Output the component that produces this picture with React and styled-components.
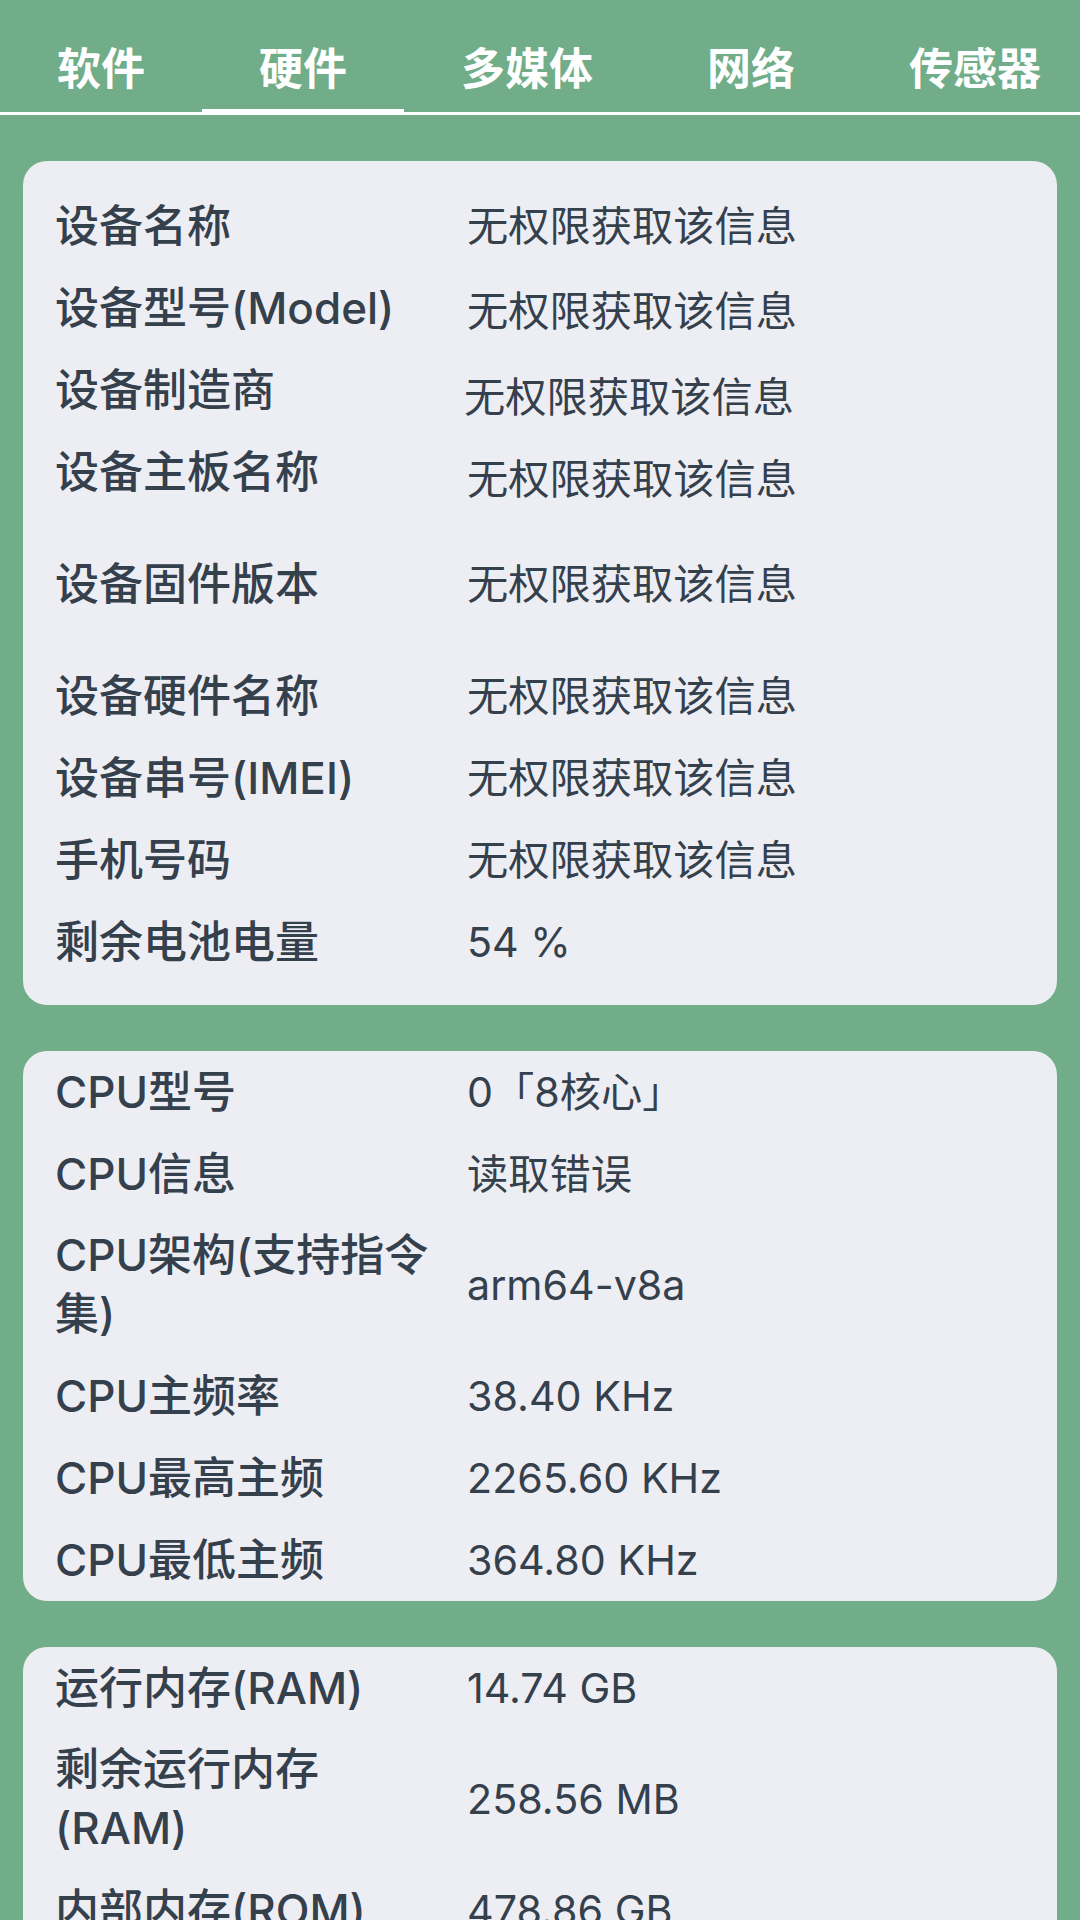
import React from 'react';
import styled, { createGlobalStyle } from 'styled-components';

const GlobalStyle = createGlobalStyle`
  html, body {
    margin: 0;
    padding: 0;
    background: #70ad88;
  }
  body {
    font-family: Inter, "Noto Sans CJK SC", sans-serif;
    color: #35404d;
  }
`;

const tabs = ['软件', '硬件', '多媒体', '网络', '传感器'];

const deviceRows = [
  { label: '设备名称', value: '无权限获取该信息' },
  { label: '设备型号(Model)', value: '无权限获取该信息', drop: 3 },
  { label: '设备制造商', value: '无权限获取该信息', drop: 7, nudge: -3 },
  { label: '设备主板名称', value: '无权限获取该信息', drop: 7 },
  { label: '设备固件版本', value: '无权限获取该信息', tall: true },
  { label: '设备硬件名称', value: '无权限获取该信息' },
  { label: '设备串号(IMEI)', value: '无权限获取该信息' },
  { label: '手机号码', value: '无权限获取该信息' },
  { label: '剩余电池电量', value: '54 %' },
];

const cpuRows = [
  { label: 'CPU型号', value: '0「8核心」' },
  { label: 'CPU信息', value: '读取错误' },
  { label: 'CPU架构(支持指令集)', value: 'arm64-v8a' },
  { label: 'CPU主频率', value: '38.40 KHz' },
  { label: 'CPU最高主频', value: '2265.60 KHz' },
  { label: 'CPU最低主频', value: '364.80 KHz' },
];

const memoryRows = [
  { label: '运行内存(RAM)', value: '14.74 GB' },
  { label: '剩余运行内存(RAM)', value: '258.56 MB' },
  { label: '内部内存(ROM)', value: '478.86 GB' },
];

const InfoCard = ({ rows, padded }) => (
  <Card $padded={padded}>
    {rows.map((row) => (
      <Row key={row.label} $tall={row.tall}>
        <Label>{row.label}</Label>
        <Value $drop={row.drop || 0} $nudge={row.nudge || 0}>
          {row.value}
        </Value>
      </Row>
    ))}
  </Card>
);

const App = () => {
  return (
    <Screen>
      <GlobalStyle />
      <TabBar>
        {tabs.map((tab, i) => (
          <Tab key={tab} $active={i === 1}>
            {tab}
          </Tab>
        ))}
      </TabBar>
      <Content>
        <InfoCard rows={deviceRows} padded />
        <InfoCard rows={cpuRows} />
        <InfoCard rows={memoryRows} />
      </Content>
    </Screen>
  );
};

export default App;

const Screen = styled.div`
  height: 1920px;
  overflow: hidden;
  background: #70ad88;
`;

const TabBar = styled.nav`
  display: flex;
  padding-top: 20px;
  border-bottom: 3px solid #ffffff;
  overflow: hidden;
`;

const Tab = styled.div`
  position: relative;
  flex-shrink: 0;
  height: 92px;
  padding: 0 57px;
  display: flex;
  align-items: center;
  font-size: 44px;
  font-weight: 700;
  color: #ffffff;
  white-space: nowrap;

  &::after {
    content: '';
    display: ${({ $active }) => ($active ? 'block' : 'none')};
    position: absolute;
    left: 0;
    right: 0;
    bottom: -3px;
    height: 6px;
    background: #ffffff;
  }
`;

const Content = styled.main`
  display: flex;
  flex-direction: column;
  gap: 46px;
  padding: 46px 23px 0;
`;

const Card = styled.section`
  background: #edeef3;
  border-radius: 24px;
  padding: ${({ $padded }) => ($padded ? '24px 32px 22px' : '0 32px')};
`;

const Row = styled.div`
  display: grid;
  grid-template-columns: 390px 1fr;
  column-gap: 22px;
  align-items: center;
  min-height: ${({ $tall }) => ($tall ? '142px' : '82px')};
  padding: 11px 0;
  box-sizing: border-box;
`;

const Label = styled.div`
  font-size: 44px;
  font-weight: 500;
  line-height: 59px;
  color: #35404d;
`;

const Value = styled.div`
  font-size: 41.25px;
  font-weight: 400;
  line-height: 59px;
  color: #35404d;
  white-space: nowrap;
  transform: translate(${({ $nudge }) => $nudge}px, ${({ $drop }) => $drop}px);
`;
